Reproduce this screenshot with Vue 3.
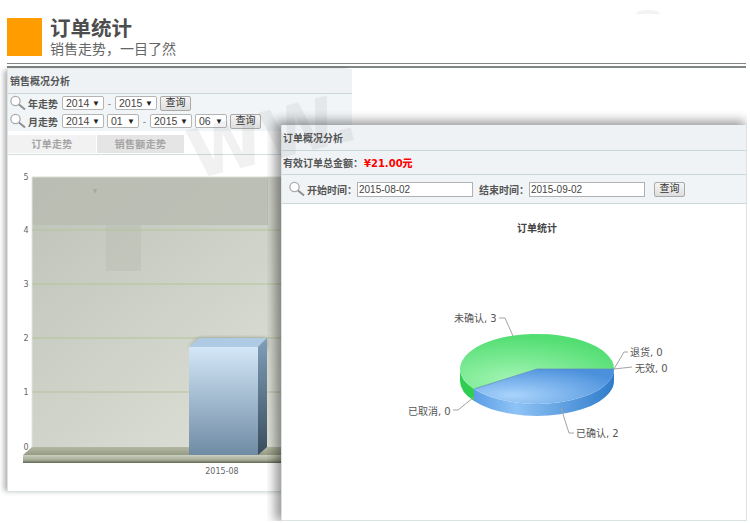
<script setup>
const yearRow = [
  { value: '2014', width: 42 },
  { sep: true },
  { value: '2015', width: 42 }
]
const monthRow = [
  { value: '2014', width: 42 },
  { value: '01', width: 32 },
  { sep: true },
  { value: '2015', width: 42 },
  { value: '06', width: 32 }
]
const gridLines = [
  { label: '5', y: 177 },
  { label: '4', y: 230 },
  { label: '3', y: 284 },
  { label: '2', y: 338 },
  { label: '1', y: 392 },
  { label: '0', y: 447 }
]
const pieLabels = [
  { text: '未确认, 3', x: 454, y: 322, line: 'M499 318H505L513 336' },
  { text: '退货, 0', x: 630, y: 356, line: 'M628 352H624L614 369' },
  { text: '无效, 0', x: 635, y: 372, line: 'M632 367L614 369' },
  { text: '已取消, 0', x: 408, y: 415, line: 'M453 410H458L474 397' },
  { text: '已确认, 2', x: 576, y: 437, line: 'M574 433H569L561 408' }
]
</script>

<template>
  <div class="page">
    <div class="head">
      <div class="logo"></div>
      <div class="head-text">
        <div class="head-title">订单统计</div>
        <div class="head-sub">销售走势，一目了然</div>
      </div>
    </div>
    <div class="rule"></div>
    <div class="arc"></div>

    <div class="win win-left">
      <div class="win-title">销售概况分析</div>
      <div class="filters">
        <div class="filter-row">
          <svg class="search" viewBox="0 0 18 16"><circle cx="6.5" cy="6" r="4.6" fill="#fff" stroke="#a9acad" stroke-width="1.3" /><path d="M10 9.5L16 14.5" stroke="#8d9091" stroke-width="2" /></svg>
          <span class="lbl">年走势</span>
          <template v-for="(item, i) in yearRow" :key="i">
            <span v-if="item.sep" class="dash">-</span>
            <span v-else class="sel" :style="{ width: item.width + 'px' }">{{ item.value }}<i>▼</i></span>
          </template>
          <button class="btn">查询</button>
        </div>
        <div class="filter-row">
          <svg class="search" viewBox="0 0 18 16"><circle cx="6.5" cy="6" r="4.6" fill="#fff" stroke="#a9acad" stroke-width="1.3" /><path d="M10 9.5L16 14.5" stroke="#8d9091" stroke-width="2" /></svg>
          <span class="lbl">月走势</span>
          <template v-for="(item, i) in monthRow" :key="i">
            <span v-if="item.sep" class="dash">-</span>
            <span v-else class="sel" :style="{ width: item.width + 'px' }">{{ item.value }}<i>▼</i></span>
          </template>
          <button class="btn">查询</button>
        </div>
      </div>
      <div class="tabs">
        <div class="tab tab-on">订单走势</div>
        <div class="tab">销售额走势</div>
      </div>
      <svg class="bar-chart" viewBox="8 155 344 335" width="344" height="335">
        <defs>
          <linearGradient id="plot" x1="0" y1="0" x2="1" y2="1">
            <stop offset="0" stop-color="#bfc2b7" />
            <stop offset="1" stop-color="#e2e5dc" />
          </linearGradient>
          <linearGradient id="front" x1="0" y1="0" x2="0" y2="1">
            <stop offset="0" stop-color="#d3e7f8" />
            <stop offset="1" stop-color="#6f8ba4" />
          </linearGradient>
          <linearGradient id="side" x1="0" y1="0" x2="0" y2="1">
            <stop offset="0" stop-color="#7f9fba" />
            <stop offset="1" stop-color="#3a4c5c" />
          </linearGradient>
          <linearGradient id="floor" x1="0" y1="0" x2="0" y2="1">
            <stop offset="0" stop-color="#ccd1bf" />
            <stop offset="0.65" stop-color="#a1a893" />
            <stop offset="1" stop-color="#5f6553" />
          </linearGradient>
          <linearGradient id="floorTop" x1="0" y1="0" x2="0" y2="1">
            <stop offset="0" stop-color="#b4b8a3" />
            <stop offset="1" stop-color="#969b84" />
          </linearGradient>
          <filter id="soft" x="-20%" y="-20%" width="140%" height="140%">
            <feGaussianBlur stdDeviation="2" />
          </filter>
        </defs>
        <rect x="32" y="177" width="320" height="270" fill="url(#plot)" />
        <rect x="32" y="177" width="236" height="48" fill="#b9bcb1" opacity="0.85" />
        <rect x="106" y="225" width="35" height="46" fill="#b9bcb1" opacity="0.45" />
        <path d="M93 189L97 189L95 194Z" fill="#a5a89e" />
        <line x1="32" y1="177" x2="352" y2="177" stroke="#d8dccf" />
        <line x1="32" y1="177" x2="32" y2="447" stroke="#e4e6dd" />
        <template v-for="g in gridLines" :key="g.label">
          <line v-if="g.label !== '0' && g.label !== '5'" x1="32" :y1="g.y" x2="352" :y2="g.y" stroke="#b3c49c" />
          <text class="axis" x="26" :y="g.y + 3" text-anchor="middle">{{ g.label }}</text>
        </template>
        <path d="M32 447H352V455H23Z" fill="url(#floorTop)" />
        <rect x="23" y="455" width="329" height="8" fill="url(#floor)" />
        <path d="M199 338H267V350L258 347H189Z" fill="#3b4038" opacity="0.35" filter="url(#soft)" />
        <path d="M189 347L199 338H267L258 347Z" fill="#aecbe3" />
        <rect x="189" y="347" width="69" height="108" fill="url(#front)" />
        <path d="M258 347L267 338V447L258 455Z" fill="url(#side)" />
        <text class="axis" x="222" y="474" text-anchor="middle">2015-08</text>
      </svg>
    </div>

    <div class="win win-right">
      <div class="win-title">订单概况分析</div>
      <div class="total">有效订单总金额：<b>¥21.00元</b></div>
      <div class="query">
        <svg class="search" viewBox="0 0 18 16"><circle cx="6.5" cy="6" r="4.6" fill="#fff" stroke="#a9acad" stroke-width="1.3" /><path d="M10 9.5L16 14.5" stroke="#8d9091" stroke-width="2" /></svg>
        <span class="lbl">开始时间：</span>
        <input class="date" value="2015-08-02" />
        <span class="lbl lbl-end">结束时间：</span>
        <input class="date" value="2015-09-02" />
        <button class="btn btn-query">查询</button>
      </div>
      <svg class="pie" viewBox="282 204 464 316" width="464" height="316">
        <defs>
          <radialGradient id="greenTop" cx="0.35" cy="0.85" r="0.8">
            <stop offset="0" stop-color="#a4f5b4" />
            <stop offset="1" stop-color="#53de73" />
          </radialGradient>
          <radialGradient id="blueTop" cx="0.28" cy="0.75" r="0.85">
            <stop offset="0" stop-color="#a9d3fb" />
            <stop offset="1" stop-color="#4a90dc" />
          </radialGradient>
          <linearGradient id="blueSide" x1="0" y1="0" x2="1" y2="0">
            <stop offset="0" stop-color="#5c9ee6" />
            <stop offset="0.3" stop-color="#8ec3f5" />
            <stop offset="1" stop-color="#2f7ccb" />
          </linearGradient>
        </defs>
        <text class="pie-title" x="537" y="232" text-anchor="middle">订单统计</text>
        <path d="M460 369V381A77 35 0 0 0 474 401V389A77 35 0 0 1 460 369Z" fill="#2fce52" />
        <path d="M474 389V401A77 35 0 0 0 614 381V369A77 35 0 0 1 474 389Z" fill="url(#blueSide)" />
        <path d="M537 369L474 389A77 35 0 1 1 614 369Z" fill="url(#greenTop)" />
        <path d="M537 369H614A77 35 0 0 1 474 389Z" fill="url(#blueTop)" />
        <path d="M474 389L537 369H614" fill="none" stroke="#5f8fbd" stroke-width="0.8" />
        <g v-for="p in pieLabels" :key="p.text">
          <path :d="p.line" fill="none" stroke="#a3a3a3" />
          <text class="pie-label" :x="p.x" :y="p.y">{{ p.text }}</text>
        </g>
      </svg>
    </div>

    <div class="mark-clip">
      <div class="mark">WW.</div>
    </div>
  </div>
</template>

<style scoped>
.page {
  position: relative;
  width: 750px;
  height: 523px;
  overflow: hidden;
  background: #fff;
  font-family: "Liberation Sans", "Noto Sans CJK SC", sans-serif;
  color: #444;
}

.head {
  display: flex;
  align-items: flex-start;
  gap: 8px;
  height: 38px;
  padding: 18px 0 0 7px;
}

.logo {
  width: 35px;
  height: 38px;
  background: #ff9c00;
}

.head-title {
  font-size: 20.5px;
  line-height: 22px;
  font-weight: 700;
  color: #4d4d4d;
}

.head-sub {
  font-size: 14px;
  line-height: 19px;
  color: #666;
}

.rule {
  margin: 7px 4px 0 7px;
  height: 2px;
  border-top: 1px solid #7f8683;
  border-bottom: 2px solid #7f8683;
}

.arc {
  position: absolute;
  left: 636px;
  top: 10px;
  width: 24px;
  height: 4px;
  border-radius: 50% 50% 0 0 / 100% 100% 0 0;
  background: #f3f3f3;
}

.win {
  position: absolute;
  background: #fff;
  box-sizing: border-box;
  border: 1px solid #d8e4e4;
}

.win-left {
  left: 7px;
  top: 69px;
  width: 345px;
  height: 423px;
  border-top: 0;
  border-right: 0;
  box-shadow: -4px 0 5px -1px rgba(0, 0, 0, 0.3);
}

.win-right {
  left: 281px;
  top: 125px;
  width: 466px;
  height: 396px;
  border-top: 0;
  box-shadow: -4px -2px 10px 2px rgba(0, 0, 0, 0.4);
  clip-path: inset(-14px 0 0 -14px);
}

.win-title {
  height: 24px;
  line-height: 26px;
  padding-left: 2px;
  background: #eef2f5;
  border-bottom: 1px solid #c8d8d8;
  font-size: 10px;
  font-weight: 700;
  color: #555;
}

.win-right .win-title {
  height: 25px;
  line-height: 27px;
  padding-left: 1px;
}

.filters {
  height: 37px;
  background: #f1f5f7;
}

.filter-row {
  display: flex;
  align-items: center;
  gap: 3px;
  height: 18px;
  padding-left: 1px;
}

.search {
  width: 18px;
  height: 16px;
  flex: none;
}

.filter-row .lbl {
  margin: 0 1px 0 -2px;
}

.lbl {
  font-size: 10px;
  font-weight: 700;
  color: #555;
  white-space: nowrap;
}

.sel {
  display: flex;
  align-items: center;
  justify-content: space-between;
  box-sizing: border-box;
  height: 14px;
  padding: 0 3px;
  background: #fff;
  border: 1px solid #b5b5b5;
  border-radius: 2px;
  font-size: 10.5px;
  color: #444;
}

.sel i {
  font-style: normal;
  font-size: 8px;
  color: #222;
}

.dash {
  width: 5px;
  text-align: center;
  font-size: 10px;
  color: #888;
}

.btn {
  box-sizing: border-box;
  width: 31px;
  height: 15px;
  padding: 0;
  line-height: 12px;
  background: linear-gradient(#f5f5f5, #dedede);
  border: 1px solid #a9a9a9;
  border-radius: 2px;
  font-family: inherit;
  font-size: 10px;
  color: #333;
}

.tabs {
  display: flex;
  gap: 1px;
  height: 19px;
  margin-top: 4px;
  border-bottom: 1px solid #d3e0e0;
}

.tab {
  width: 87px;
  height: 18px;
  line-height: 19px;
  text-align: center;
  background: #e5e5e5;
  font-size: 10px;
  font-weight: 700;
  letter-spacing: 0.3px;
  color: #a4a4a4;
}

.tab-on {
  width: 88px;
  background: #f2f2f2;
}

.bar-chart {
  display: block;
}

.axis {
  font-family: "DejaVu Sans", sans-serif;
  font-size: 8px;
  fill: #666;
}

/* watermark only shows above the plot */
.mark-clip {
  position: absolute;
  left: 0;
  top: 0;
  width: 750px;
  height: 177px;
  overflow: hidden;
  pointer-events: none;
}

.mark {
  position: absolute;
  left: 198px;
  top: 122px;
  transform: rotate(-14deg);
  transform-origin: 0 100%;
  font-family: "DejaVu Sans", sans-serif;
  font-size: 68px;
  line-height: 68px;
  font-weight: 700;
  color: rgba(120, 120, 120, 0.1);
  white-space: nowrap;
}

.total {
  height: 24px;
  line-height: 25px;
  padding-left: 1px;
  background: #f0f3f5;
  border-bottom: 1px solid #c8d8d8;
  box-sizing: border-box;
  font-size: 10px;
  font-weight: 700;
  color: #555;
}

.total b {
  margin-left: 1px;
  font-family: "DejaVu Sans", "Noto Sans CJK SC", sans-serif;
  color: #f00;
}

.query {
  display: flex;
  align-items: center;
  height: 29px;
  padding-left: 6px;
  background: #f0f4f6;
  border-bottom: 1px solid #c8d8d8;
  box-sizing: border-box;
}

.query .lbl {
  margin-left: 1px;
}

.date {
  box-sizing: border-box;
  width: 116px;
  height: 15px;
  padding: 0 1px;
  background: #fff;
  border: 1px solid #b0b0b0;
  font-family: "Liberation Sans", sans-serif;
  font-size: 10px;
  color: #444;
}

.query .lbl-end {
  margin-left: 6px;
}

.btn-query {
  margin-left: 9px;
}

.pie {
  display: block;
}

.pie-title {
  font-size: 10px;
  font-weight: 700;
  fill: #444;
}

.pie-label {
  font-family: "DejaVu Sans", "Noto Sans CJK SC", sans-serif;
  font-size: 10px;
  fill: #555;
}
</style>
